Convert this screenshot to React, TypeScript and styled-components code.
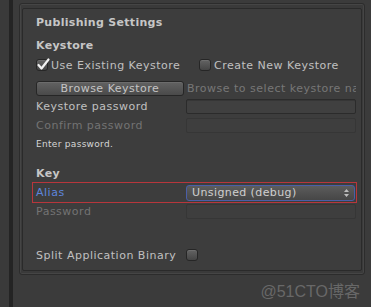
import React from "react";
import styled, { createGlobalStyle } from "styled-components";

const Global = createGlobalStyle`
  html, body { margin: 0; padding: 0; background: #3b3b3b; }
  body { font-family: "DejaVu Sans", Verdana, sans-serif; }
  #root { width: 371px; height: 307px; }
`;

const Screen = styled.div`
  width: 371px;
  height: 307px;
  display: flex;
  background: #3b3b3b;
  overflow: hidden;
`;

const Rail = styled.div`
  width: 9px;
  flex: none;
  background: #3a3a3a;
  border-right: 4px solid #242424;
`;

const Main = styled.div`
  flex: 1;
  min-width: 0;
  display: flex;
  flex-direction: column;
  padding: 3px 6px 0 6px;
`;

const Frame = styled.div`
  min-width: 0;
  border: 1px solid #2c2c2c;
  border-radius: 3px;
  box-shadow: inset 0 0 0 1px #454545;
  padding: 4px 2px 3px 2px;
  background: #3a3a3a;
`;

const Panel = styled.div`
  min-width: 0;
  height: 263px;
  box-sizing: border-box;
  border: 1px solid #2a2a2a;
  border-radius: 2px;
  background: #3d3d3d;
  padding: 4px 5px 0 13px;
  display: flex;
  flex-direction: column;
`;

const Title = styled.div<{ $mt?: number; $h?: number }>`
  height: ${(p) => p.$h ?? 18}px;
  margin-top: ${(p) => p.$mt ?? 0}px;
  display: flex;
  align-items: center;
  font-weight: bold;
  font-size: 11px;
  letter-spacing: 0.3px;
  color: #c6c6c6;
`;

const Row = styled.div<{ $mt?: number; $h?: number }>`
  min-width: 0;
  height: ${(p) => p.$h ?? 16}px;
  margin-top: ${(p) => p.$mt ?? 0}px;
  display: flex;
  align-items: center;
`;

const Label = styled.div<{ $tone?: "normal" | "dim" | "focus" }>`
  width: 150px;
  flex: none;
  font-size: 11px;
  letter-spacing: 0.5px;
  color: ${(p) =>
    p.$tone === "dim" ? "#737373" : p.$tone === "focus" ? "#5d85dc" : "#c0c0c0"};
  white-space: nowrap;
`;

const Field = styled.div<{ $disabled?: boolean }>`
  flex: 1;
  min-width: 0;
  height: 15px;
  box-sizing: border-box;
  border: 1px solid ${(p) => (p.$disabled ? "#363636" : "#2b2b2b")};
  border-radius: 2px;
  background: ${(p) => (p.$disabled ? "#3e3e3e" : "#404040")};
  box-shadow: ${(p) => (p.$disabled ? "none" : "inset 0 1px 0 #363636")};
`;

const CheckItem = styled.label<{ $w?: number }>`
  width: ${(p) => (p.$w ? `${p.$w}px` : "auto")};
  flex: none;
  display: flex;
  align-items: center;
  gap: 3px;
  font-size: 11px;
  letter-spacing: 0.5px;
  color: #c0c0c0;
  white-space: nowrap;
`;

const Box = styled.span`
  position: relative;
  width: 12px;
  height: 12px;
  box-sizing: border-box;
  flex: none;
  border: 1px solid #262626;
  border-radius: 3px;
  background: linear-gradient(#636363, #454545);
  box-shadow: inset 0 1px 0 #6e6e6e;
`;

const Tick = styled.svg`
  position: absolute;
  left: 0px;
  top: -2px;
  width: 13px;
  height: 13px;
`;

const Button = styled.div`
  width: 148px;
  height: 15px;
  flex: none;
  box-sizing: border-box;
  border: 1px solid #262626;
  border-radius: 3px;
  background: linear-gradient(#626262, #4a4a4a);
  box-shadow: inset 0 1px 0 #6c6c6c;
  display: flex;
  align-items: center;
  justify-content: center;
  font-size: 11px;
  letter-spacing: 0.5px;
  color: #c4c4c4;
`;

const Hint = styled.div`
  flex: 1;
  min-width: 0;
  margin-left: 3px;
  overflow: hidden;
  white-space: nowrap;
  font-size: 11px;
  letter-spacing: 0.5px;
  color: #777777;
`;

const Note = styled.div<{ $mt?: number }>`
  margin-top: ${(p) => p.$mt ?? 0}px;
  height: 14px;
  display: flex;
  align-items: center;
  font-size: 9px;
  letter-spacing: 0.3px;
  color: #d6d6d6;
`;

const Highlight = styled.div<{ $mt?: number }>`
  margin: ${(p) => p.$mt ?? 0}px -1px 0 -4px;
  height: 21px;
  box-sizing: border-box;
  border: 1px solid #b8363c;
  padding: 0 1px 0 3px;
  display: flex;
  align-items: center;
`;

const Popup = styled.div`
  flex: 1;
  min-width: 0;
  height: 16px;
  box-sizing: border-box;
  border: 1px solid #4a5ea8;
  border-radius: 3px;
  background: linear-gradient(#5c5c5c, #464646);
  display: flex;
  align-items: center;
  justify-content: space-between;
  padding: 0 5px 0 5px;
  font-size: 11px;
  letter-spacing: 0.4px;
  color: #cfcfcf;
`;

const Arrows = styled.svg`
  width: 5px;
  height: 8px;
`;

const Watermark = styled.div`
  margin-top: 3px;
  padding-right: 5px;
  text-align: right;
  font-family: "Liberation Sans", "Noto Sans CJK SC", sans-serif;
  font-size: 16px;
  color: #686868;
  white-space: nowrap;
`;

function Check({ checked }: { checked?: boolean }) {
  return (
    <Box>
      {checked && (
        <Tick viewBox="0 0 13 13">
          <path
            d="M1.5 7 L4.5 10.5 L11.5 1.5"
            fill="none"
            stroke="#f2f2f2"
            strokeWidth="2.2"
            strokeLinecap="round"
            strokeLinejoin="round"
          />
        </Tick>
      )}
    </Box>
  );
}

export default function App() {
  return (
    <Screen>
      <Global />
      <Rail />
      <Main>
        <Frame>
          <Panel>
            <Title>Publishing Settings</Title>
            <Title $mt={6} $h={17}>Keystore</Title>
            <Row $mt={3}>
              <CheckItem $w={163}>
                <Check checked />
                Use Existing Keystore
              </CheckItem>
              <CheckItem>
                <Check />
                Create New Keystore
              </CheckItem>
            </Row>
            <Row $mt={8} $h={15}>
              <Button>Browse Keystore</Button>
              <Hint>Browse to select keystore name</Hint>
            </Row>
            <Row $mt={2}>
              <Label>Keystore password</Label>
              <Field />
            </Row>
            <Row $mt={3}>
              <Label $tone="dim">Confirm password</Label>
              <Field $disabled />
            </Row>
            <Note $mt={4}>Enter password.</Note>
            <Title $mt={14} $h={16}>Key</Title>
            <Highlight $mt={1}>
              <Label $tone="focus">Alias</Label>
              <Popup>
                <span>Unsigned (debug)</span>
                <Arrows viewBox="0 0 5 8">
                  <path d="M0 3 L2.5 0 L5 3 Z M0 5 L2.5 8 L5 5 Z" fill="#bdbdbd" />
                </Arrows>
              </Popup>
            </Highlight>
            <Row $mt={1} $h={14}>
              <Label $tone="dim">Password</Label>
              <Field $disabled />
            </Row>
            <Row $mt={29}>
              <Label>Split Application Binary</Label>
              <Check />
            </Row>
          </Panel>
        </Frame>
        <Watermark>@51CTO博客</Watermark>
      </Main>
    </Screen>
  );
}
